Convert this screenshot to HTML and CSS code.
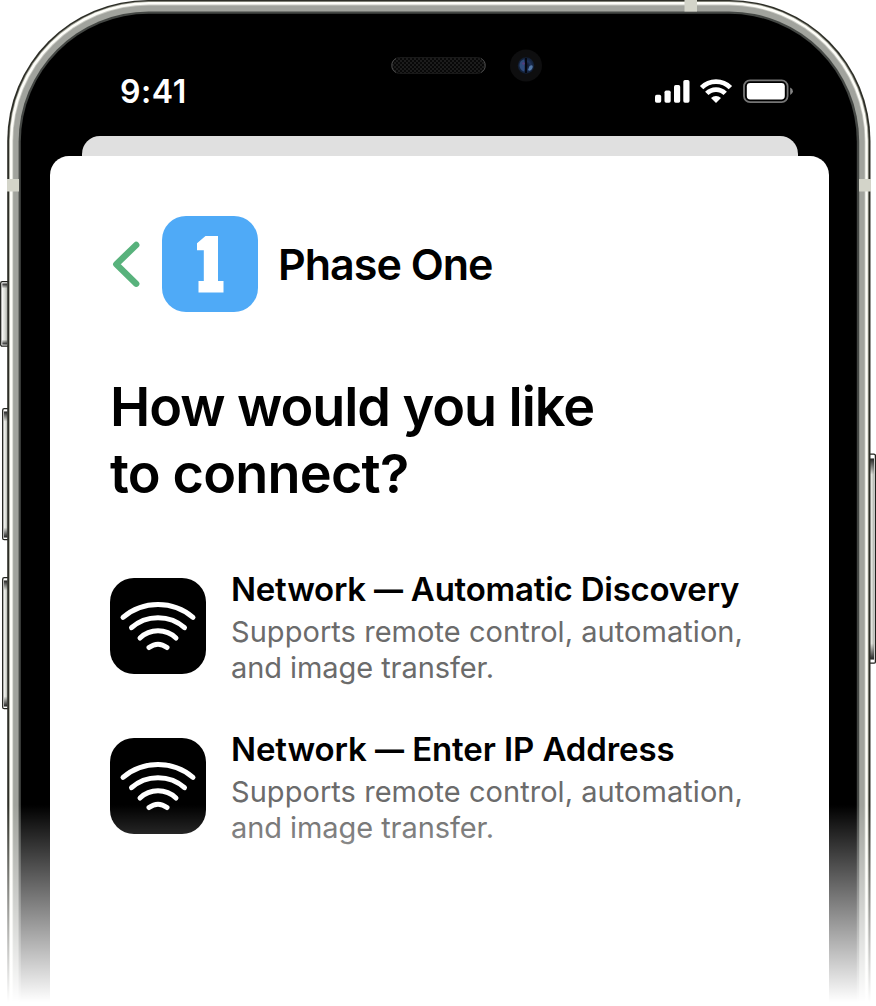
FILE: index.html
```
<!DOCTYPE html>
<html lang="en">
<head>
<meta charset="utf-8">
<title>Phase One – Connect</title>
<link rel="stylesheet" href="styles.css">
</head>
<body>
<main class="phone">
  <svg class="frame" width="876" height="1006" viewBox="0 0 876 1006" aria-hidden="true">
    <defs>
      <linearGradient id="key" x1="0" x2="1" y1="0" y2="0">
        <stop offset="0" stop-color="#f4f5f0"/><stop offset=".5" stop-color="#dcded8"/><stop offset="1" stop-color="#b0b3ab"/>
      </linearGradient>
      <linearGradient id="keyEnds" x1="0" x2="0" y1="0" y2="1">
        <stop offset="0" stop-color="#222"/><stop offset=".08" stop-color="#222" stop-opacity="0"/><stop offset=".92" stop-color="#222" stop-opacity="0"/><stop offset="1" stop-color="#222"/>
      </linearGradient>
      <pattern id="mesh" width="4" height="4" patternUnits="userSpaceOnUse">
        <rect width="4" height="4" fill="#080808"/><path d="M0 0h2v2h2v2H2V2H0z" fill="#1c1c1c"/>
      </pattern>
      <radialGradient id="lens"><stop offset="0" stop-color="#080b18"/><stop offset=".55" stop-color="#1d3158"/><stop offset="1" stop-color="#101c30"/></radialGradient>
    </defs>
    <!-- side keys -->
    <g fill="#fff" stroke="#20211c" stroke-width="1.3">
      <rect x=".7" y="281.7" width="9" height="64.5" rx="1.5"/>
      <rect x="2.7" y="408.7" width="7" height="131" rx="1.5"/>
      <rect x="2.7" y="577.7" width="7" height="131" rx="1.5"/>
      <rect x="867" y="454.2" width="8.4" height="209" rx="1.5"/>
    </g>
    <g fill="url(#key)">
      <rect x="2.3" y="283.5" width="5" height="61"/><rect x="4" y="411.5" width="3.5" height="126"/>
      <rect x="4" y="580.5" width="3.5" height="126"/><rect x="870" y="458.5" width="4" height="201"/>
    </g>
    <g fill="url(#keyEnds)">
      <rect x="2.3" y="283.5" width="5" height="61"/><rect x="4" y="411.5" width="3.5" height="126"/>
      <rect x="4" y="580.5" width="3.5" height="126"/><rect x="870" y="458.5" width="4" height="201"/>
    </g>
    <!-- steel band, from the outer edge inwards -->
    <rect x="7.2" y="0" width="863.3" height="1200" rx="141" fill="#2d2e27"/>
    <rect x="9" y="1.3" width="859.7" height="1200" rx="139.5" fill="#9b9c91"/>
    <rect x="9.8" y="2" width="858" height="1200" rx="139" fill="#fdfdf8"/>
    <rect x="12.4" y="4.6" width="853" height="1200" rx="136.5" fill="#c9cac3"/>
    <rect x="13.2" y="5.4" width="851.4" height="1200" rx="136" fill="#a1a39d"/>
    <rect x="18.6" y="11.6" width="840.6" height="1200" rx="130" fill="#444744"/>
    <rect x="20.8" y="13.7" width="836" height="1200" rx="128" fill="#000"/>
    <g fill="#d3d4c9">
      <rect x="684.5" y="0" width="12.5" height="11.5"/><rect x="7" y="179" width="12" height="12.5"/><rect x="859" y="179" width="12" height="12.5"/>
    </g>
    <rect x="391.5" y="57.5" width="94" height="16" rx="8" fill="url(#mesh)" stroke="#191919"/>
    <path d="M396 58.5a8 8 0 0 0 0 14M481 58.5a8 8 0 0 1 0 14" fill="none" stroke="#555" stroke-width=".8"/>
    <circle cx="526" cy="65.5" r="16" fill="#0e0e0f"/>
    <circle cx="526" cy="65.5" r="8.2" fill="url(#lens)"/>
    <path d="M524 59.5c-6 1-6 10 0 12c1-4 1-8 0-12z" fill="#2f4b7c"/><path d="M529.5 66q4-2 3 2q-2 4-4.500 2z" fill="#5277a5"/><circle cx="523.500" cy="63.500" r="1.300" fill="#583c7c"/><path d="M526 58v15" stroke="#05070f" stroke-width="2"/>
  </svg>

  <header class="status">
    <span class="clock">9:41</span>
    <svg class="indicators" width="140" height="28" viewBox="0 0 140 28" fill="#fff" aria-label="Signal, Wi-Fi, battery">
      <rect x="2" y="17.7" width="6.2" height="8" rx="1.7"/><rect x="11.5" y="13.5" width="6.2" height="12.2" rx="1.7"/><rect x="21" y="8" width="6.2" height="17.7" rx="1.7"/><rect x="30.3" y="3" width="6.2" height="22.7" rx="1.7"/>
      <g fill="none" stroke="#fff" stroke-width="4.8"><path d="M48.6 10.6a20.3 20.3 0 0 1 28.8 0"/><path d="M53.8 16.4a13 13 0 0 1 18.400 0"/></g>
      <path d="M58 21a7.300 7.300 0 0 1 10 0L63 26z"/>
      <rect x="91" y="3.3" width="43.6" height="21.8" rx="6" fill="none" stroke="#757575" stroke-width="1.8"/><rect x="93.8" y="6" width="38" height="16.4" rx="3.4"/><path d="M137.2 10.4q2.7 1.2 2.7 3.8t-2.7 3.8z" fill="#858585"/>
    </svg>
  </header>

  <div class="sheet-behind"></div>
  <section class="sheet">
    <nav class="device">
      <svg class="back" width="32" height="52" viewBox="0 0 32 52" fill="none" stroke="#58b27c" stroke-width="6.4" stroke-linecap="round" stroke-linejoin="round"><path d="M26.2 7L6.3 26.2l19.9 19.5"/></svg>
      <svg class="logo" width="96" height="96" viewBox="0 0 96 96"><rect width="96" height="96" rx="24" fill="#4faaf7"/><path fill="#fff" d="M43.5 20H56v45h5.5v11.5h-25V65h5.3V34.2H35v-7z"/></svg>
      <span class="device-name">Phase One</span>
    </nav>
    <h1 class="question">How would you like<br><span class="second">to connect?</span></h1>
    <div class="options">
      <article class="option">
        <svg class="tile" width="96" height="96" viewBox="0 0 96 96"><rect width="96" height="96" rx="24"/><g fill="none" stroke="#fff" stroke-width="5" stroke-linecap="round"><path d="M13 39.4C33 22.2 63 22.2 83 39.4"/><path d="M21.5 49.7C36 36.3 60 36.3 74.5 49.7"/><path d="M30 60C40 50.4 56 50.4 66 60"/><path d="M39 69.5q9-6.6 18 0"/></g></svg>
        <div class="copy"><h2 class="title">Network <span class="dash">—</span> Automatic Discovery</h2><p class="detail">Supports remote control, automation,<br><span class="last">and image transfer.</span></p></div>
      </article>
      <article class="option">
        <svg class="tile" width="96" height="96" viewBox="0 0 96 96"><rect width="96" height="96" rx="24"/><g fill="none" stroke="#fff" stroke-width="5" stroke-linecap="round"><path d="M13 39.4C33 22.2 63 22.2 83 39.4"/><path d="M21.5 49.7C36 36.3 60 36.3 74.5 49.7"/><path d="M30 60C40 50.4 56 50.4 66 60"/><path d="M39 69.5q9-6.6 18 0"/></g></svg>
        <div class="copy"><h2 class="title title-ip">Network <span class="dash">—</span> Enter IP Address</h2><p class="detail">Supports remote control, automation,<br><span class="last">and image transfer.</span></p></div>
      </article>
    </div>
  </section>
  <div class="fade"></div>
</main>
</body>
</html>
```
FILE: styles.css
```
* { box-sizing: border-box; }
body { margin: 0; background: #fff; font-family: Inter, "Liberation Sans", sans-serif; color: #000; }
h1, h2, p { margin: 0; }
.phone { position: relative; width: 876px; height: 1006px; overflow: hidden; display: flex; flex-direction: column; }
.frame { position: absolute; inset: 0; }
.status, .sheet-behind, .sheet { position: relative; flex-shrink: 0; }
.status { height: 136px; padding: 76px 83px 0 120px; display: flex; justify-content: space-between; align-items: flex-start; color: #fff; }
.clock { font-size: 32px; line-height: 32px; font-weight: 600; letter-spacing: 0.6px; }
.indicators { margin-top: 1px; }
.sheet-behind { width: 716px; height: 20px; margin-left: 82px; background: #e0e0e0; border-radius: 18px 18px 0 0; }
.sheet { width: 779px; height: 850px; margin-left: 50px; padding: 60px 60px 0; background: #fff; border-radius: 19px 19px 0 0; }
.device { display: flex; align-items: center; height: 96px; }
.logo { margin-left: 20px; }
.device-name { margin-left: 20px; font-size: 43px; line-height: 52px; font-weight: 600; letter-spacing: -1px; white-space: nowrap; }
.question { margin-top: 61px; font-size: 54px; line-height: 67px; font-weight: 600; letter-spacing: -1.06px; white-space: nowrap; }
.second { letter-spacing: -0.8px; }
.options { margin-top: 62px; display: flex; flex-direction: column; gap: 43px; }
.option { display: flex; align-items: flex-start; gap: 25px; height: 117px; }
.tile { flex: none; margin-top: 9px; }
.title { font-size: 33px; line-height: 40px; font-weight: 600; letter-spacing: -0.23px; white-space: nowrap; }
.title-ip { letter-spacing: -0.1px; }
.dash { display: inline-block; transform: scaleX(.88); margin: 0 -2px; }
.detail { margin-top: 5px; font-size: 29px; line-height: 36px; letter-spacing: 0.05px; color: #6b6b6b; white-space: nowrap; }
.last { letter-spacing: -0.07px; }
.fade { position: absolute; left: 0; right: 0; top: 805px; bottom: 0; background: linear-gradient(rgba(255,255,255,0), #fff 197px); }
```
